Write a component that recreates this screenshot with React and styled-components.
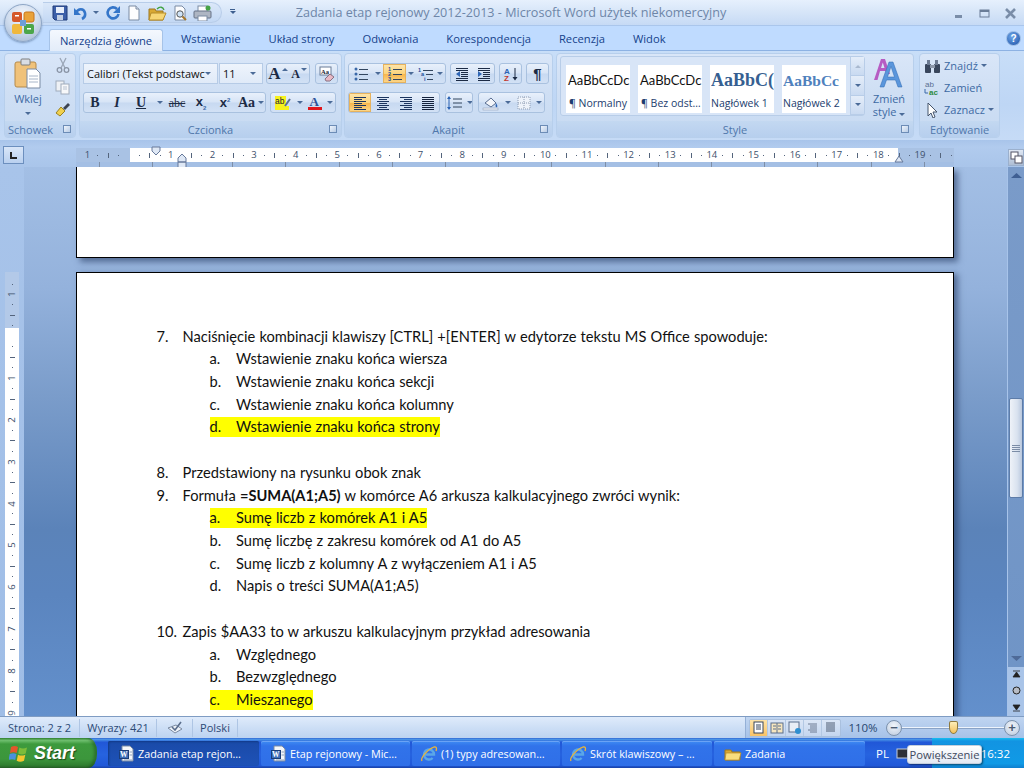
import React from "react";
import styled, { createGlobalStyle } from "styled-components";

const Global = createGlobalStyle`
  html, body { margin: 0; padding: 0; background: #6a90c4; }
  * { box-sizing: border-box; }
`;

const Win = styled.div`
  position: relative; width: 1024px; height: 768px; overflow: hidden;
  display: flex; flex-direction: column;
  font-family: "Open Sans", "Liberation Sans", sans-serif; font-size: 11px; color: #15428b;
`;
/* ---------- title ---------- */
const TitleBar = styled.div`
  height: 26px; flex: none; display: flex; align-items: center;
  background: linear-gradient(180deg, #e6f0fd 0%, #d6e5f8 50%, #c6daf5 100%);
  border-bottom: 1px solid #aac6ec; padding-left: 43px;
`;
const Qat = styled.div`
  width: 179px; height: 21px; display: flex; align-items: center; gap: 5px; padding-left: 9px;
  border: 1px solid #b8cde9; border-left: none; border-radius: 0 11px 11px 0;
  background: linear-gradient(180deg, #dbe8f9, #c3d8f4);
`;
const QatDrop = styled.div`
  margin-left: 6px; width: 9px; display: flex; flex-direction: column; align-items: center; gap: 1px;
  &::before { content: ""; width: 5px; height: 1px; background: #3d5f8f; }
  &::after { content: ""; border: 3px solid transparent; border-top-color: #3d5f8f; }
`;
const Title = styled.div`
  width: 432px; margin-left: 58px; white-space: nowrap; font-size: 12.6px; color: #6e86a8; text-align: center;
`;
const WinBtns = styled.div`
  margin-left: auto; display: flex; align-items: center; gap: 8px; padding-right: 4px;
`;
const OfficeBtn = styled.div`
  position: absolute; z-index: 5; left: 4px; top: 4px; width: 38px; height: 38px; border-radius: 50%;
  display: flex; align-items: center; justify-content: center;
  background: radial-gradient(circle at 50% 30%, #f6f9fe 0%, #cfdcee 50%, #9eb4d0 100%);
  border: 1px solid #8ea6c6; box-shadow: 0 1px 2px rgba(60,90,130,.5);
`;
/* ---------- tabs ---------- */
const TabRow = styled.div`
  height: 25px; flex: none; display: flex; align-items: flex-end; padding-left: 49px;
  background: #bfdbff; border-bottom: 1px solid #8db2e3;
`;
const Tab = styled.div`
  height: 22px; line-height: 21px; white-space: nowrap; font-size: 11.2px; flex: none;
  padding: 0 ${p => (p.$active ? 0 : 14)}px; margin-right: ${p => (p.$active ? 4 : 0)}px;
  color: #15428b; margin-bottom: ${p => (p.$active ? -1 : 0)}px;
  ${p => p.$active ? `width: 114px; text-align: center; background: linear-gradient(180deg,#f4f8fe,#e3ecf9); border: 1px solid #a6c3e8; border-bottom: none; border-radius: 3px 3px 0 0;` : ""}
`;
const Help = styled.div`
  margin-left: auto; margin-right: 3px; margin-bottom: 4px; width: 15px; height: 15px;
  border-radius: 50%; background: radial-gradient(circle at 40% 35%, #6fa8ea, #1b4fa5);
  border: 1px solid #9bbbe4; color: #fff; font: bold 10px/13px "Liberation Sans", sans-serif; text-align: center;
`;
/* ---------- ribbon ---------- */
const Ribbon = styled.div`
  height: 89px; flex: none; display: flex; padding: 2px 0 0 4px;
  background: linear-gradient(180deg, #c8def8 0%, #bed6f5 60%, #c6dbf6 100%);
`;
const Group = styled.div`
  width: ${p => p.$w}px; height: 85px; margin-right: ${p => p.$gap}px; flex: none;
  display: flex; flex-direction: column; border-radius: 4px; overflow: hidden;
  border: 1px solid #b7cfec;
  background: linear-gradient(180deg, #d9e6f8 0%, #cfdff4 45%, #c7daf2 100%);
`;
const GroupBody = styled.div`
  flex: 1; min-height: 0; display: flex;
`;
const GroupLabel = styled.div`
  height: 16px; flex: none; position: relative; text-align: ${p => (p.$left ? "left" : "center")};
  padding-left: ${p => (p.$left ? 3 : 0)}px; line-height: 17px; font-size: 11px;
  color: #4f77ab; background: linear-gradient(180deg,#c3d8f1,#b7cfee);
`;
const Launcher = styled.span`
  position: absolute; right: 4px; top: 4px; width: 8px; height: 8px; border: 1px solid #6c8cb6;
  background: linear-gradient(135deg,#eef4fc,#b8cce6);
`;
const PasteCol = styled.div`
  width: 46px; flex: none; display: flex; flex-direction: column; align-items: center; padding-top: 4px; color: #15428b;
`;
const PasteLabel = styled.div` margin-top: 2px; line-height: 14px; font-size: 11px; color: #3d6aa3; `;
const Caret = styled.span`
  display: inline-block; border: 3px solid transparent; border-top-color: ${p => p.$c || "#4b6b98"}; border-bottom: none;
  margin: ${p => p.$m || "0"};
`;
const RaisedCaret = styled(Caret)`
  margin-bottom: 8px; margin-left: -2px; transform: ${p => (p.$up ? "rotate(180deg)" : "none")};
`;
const ClipCol = styled.div`
  flex: 1; display: flex; flex-direction: column; align-items: center; padding-top: 3px; gap: 6px;
`;
const Rows = styled.div`
  flex: 1; display: flex; flex-direction: column; gap: 8px; padding: 9px 0 0 ${p => p.$pl}px;
`;
const Row = styled.div` display: flex; height: 21px; gap: ${p => p.$gap ?? 4}px; `;
const Tools = styled.div`
  display: flex; height: 21px; width: ${p => p.$w}px; flex: none; overflow: hidden;
  margin-left: ${p => p.$ml || 0}px;
  border: 1px solid #a9c1df; border-radius: 3px;
  background: linear-gradient(180deg,#e8f0fb 0%,#d7e4f6 48%,#c7d9f1 52%,#d2e1f5 100%);
`;
const Tool = styled.div`
  width: ${p => p.$w}px; flex: none; height: 19px; display: flex; align-items: center; justify-content: center; gap: 3px;
  color: #1c2b45; white-space: nowrap;
  ${p => p.$on ? "background: linear-gradient(180deg,#fde6ae 0%,#fbd47e 50%,#f9b84e 55%,#fbd990 100%); box-shadow: inset 0 0 0 1px #e6b25e;" : ""}
`;
const Combo = styled.div`
  height: 21px; width: ${p => p.$w}px; flex: none; display: flex; align-items: center; justify-content: space-between;
  padding: 0 6px 0 3px; font-size: 11px; color: #111; white-space: nowrap; overflow: hidden;
  background: linear-gradient(180deg,#eef4fc,#e0eaf8);
  border: 1px solid #b6cbe6; margin-left: ${p => p.$ml || 0}px;
`;
const Letter = styled.span`
  font: ${p => p.$i ? "italic" : ""} ${p => p.$n ? 400 : 700} ${p => p.$s || 13}px ${p => p.$sans ? '"Liberation Sans", sans-serif' : '"Liberation Serif", serif'};
  text-decoration: ${p => p.$d || "none"}; color: #1c2b45; line-height: 1;
`;
const Index = styled.span`
  font-size: 6px; color: #3a68a8; vertical-align: ${p => (p.$sup ? "super" : "sub")};
`;
const Gallery = styled.div`
  width: 305px; height: 60px; margin: 2px 0 0 3px; display: flex; padding: 8px 0 0 5px; gap: 8px; flex: none;
  border: 1px solid #b8cde8; border-radius: 3px; background: #d8e5f7; position: relative;
`;
const StyleCard = styled.div`
  width: 64px; height: 48px; flex: none; background: #fff; overflow: hidden; display: flex; flex-direction: column; align-items: flex-start;
  padding: 5px 0 0 1px; white-space: nowrap;
`;
const StylePreview = styled.div`
  height: 20px; font: ${p => p.$h ? `700 ${p.$s || 18}px/21px "Liberation Serif", serif` : `13px/21px "Lato", sans-serif`};
  color: ${p => p.$c || "#111"}; width: 63px; overflow: hidden; text-align: left;
  padding-left: ${p => p.$h ? 0 : 1}px;
`;
const StyleName = styled.div` margin-top: 6px; padding-left: ${p => p.$pl ?? 2}px; font-size: 10.5px; color: #1c3d6e; line-height: 14px; `;
const GalleryScroll = styled.div`
  position: absolute; right: 0; top: 0; bottom: 0; width: 14px; display: flex; flex-direction: column;
  border-left: 1px solid #b8cde8; background: #dbe7f7;
`;
const GalleryBtn = styled.div`
  flex: 1; display: flex; align-items: center; justify-content: center; border-bottom: 1px solid #b8cde8;
  background: linear-gradient(180deg,#e4edf9,#c9daf1);
`;
const FlipCaret = styled(Caret)` transform: rotate(180deg); `;
const ChangeStyle = styled.div`
  flex: 1; display: flex; flex-direction: column; align-items: center; padding-top: 3px;
`;
const ChangeLabel = styled.div` text-align: center; font-size: 11px; line-height: 13px; color: #3d6aa3; margin-top: 3px; `;
const EditCol = styled.div`
  flex: 1; display: flex; flex-direction: column; padding: 3px 0 0 4px; gap: 5px;
`;
const EditRow = styled.div`
  display: flex; align-items: center; height: 17px; gap: 3px; white-space: nowrap; color: #3d6aa3; font-size: 11px;
`;
const EditIcon = styled.span` width: 17px; display: flex; justify-content: center; `;
/* ---------- ruler ---------- */
const RulerRow = styled.div`
  height: 27px; flex: none; display: flex; position: relative;
  background: linear-gradient(180deg,#a8c4ea 0%,#b1cbee 25%,#a9c5ea 100%);
`;
const TabSel = styled.div`
  position: absolute; left: 3px; top: 6px; width: 21px; height: 18px; border: 1px solid #6c8fbe;
  background: linear-gradient(180deg,#d9e6f8,#b9d0ef); display: flex; align-items: center; justify-content: center;
`;
const RulerBody = styled.div`
  margin: 8px 0 0 76px; width: 878px; height: 19px; display: flex; flex-direction: column; position: relative;
`;
const RulerTrack = styled.div`
  height: 14px; flex: none; display: flex; align-items: center; padding-left: 6.3px; overflow: hidden;
  background: linear-gradient(90deg,#a9c2e4 0,#a9c2e4 54px,#fff 54px,#fff 822px,#a9c2e4 822px);
`;
const RulerCell = styled.div`
  width: 10.417px; flex: none; height: 14px; display: flex; align-items: center; justify-content: center;
  font: 9.5px/14px "Open Sans", sans-serif; color: #3c4f6b;
`;
const Mark = styled.span`
  display: block; background: #54647c; width: 1px; height: ${p => (p.$tick ? 5 : 1)}px;
`;
const RulerStrip = styled.div`
  flex: 1; background-color: #a4bfe4;
  background-image: repeating-linear-gradient(90deg, transparent 0, transparent 52.2px, #7e8ea6 52.2px, #7e8ea6 53.2px);
  background-position: 104px 0;
`;
const IndentMarks = styled.svg`
  position: absolute; left: 0; top: -2px; pointer-events: none; overflow: visible;
`;
const ViewToggle = styled.div`
  position: absolute; right: 0; top: 9px; width: 16px; height: 17px; background: linear-gradient(180deg,#dfe7f3,#aebed4);
  border: 1px solid #9bb0cd; display: flex; align-items: center; justify-content: center;
`;
/* ---------- workspace ---------- */
const Workspace = styled.div`
  height: 549px; flex: none; display: flex; overflow: hidden;
`;
const LeftRail = styled.div`
  width: 24px; flex: none; padding: 105px 5px 0 5px; background: linear-gradient(180deg,#a8c4ea,#9fbde6);
`;
const VRuler = styled.div`
  width: 14px; height: 444px; overflow: hidden; padding-top: 6.8px;
  background: linear-gradient(180deg,#b3c9e8 0,#b3c9e8 56px,#fff 56px);
`;
const VCell = styled.div`
  height: 10.46px; display: flex; align-items: center; justify-content: center;
  font: 9.5px/10px "Open Sans", sans-serif; color: #3c4f6b;
`;
const VDigit = styled.span` display: block; transform: rotate(-90deg); `;
const VMark = styled.span` display: block; background: #54647c; height: 1px; width: ${p => (p.$tick ? 5 : 1)}px; `;
const Canvas = styled.div`
  flex: 1; min-width: 0; padding-left: 52px; overflow: hidden; position: relative;
  background: linear-gradient(180deg,#a3bfe5 0%,#94b2dc 22%,#7a9cca 42%,#5b83b9 66%,#5b85bf 78%,#6390cc 100%);
`;
const PageStub = styled.div`
  width: 878px; height: 91px; background: #fff; border: solid #000; border-width: 0 1.5px 1.5px 1.5px;
  box-shadow: 4px 4px 6px rgba(30,50,90,.55); margin-bottom: 14px;
`;
const Page = styled.div`
  width: 878px; height: 470px; background: #fff; border: 1.5px solid #000; border-bottom: none;
  box-shadow: 4px 2px 6px rgba(30,50,90,.55); padding: 52.2px 0 0 79.5px;
  font-family: "Lato", sans-serif; font-size: 14.65px; color: #111;
`;
const Line = styled.div`
  height: 22.72px; line-height: 22.72px; white-space: nowrap; display: flex; align-items: center;
  margin-left: ${p => (p.$sub ? 53 : 0)}px; word-spacing: 0.4px;
`;
const Hl = styled.span`
  display: flex; height: 20px; line-height: 20px; padding-right: 0;
  background: ${p => (p.$on ? "#ffff00" : "transparent")};
`;
const Num = styled.span` width: ${p => (p.$sub ? 26.5 : 26)}px; flex: none; `;
const Strong = styled.b` font-weight: 700; `;
const ScrollBar = styled.div`
  width: 17px; flex: none; display: flex; flex-direction: column; align-items: center;
  background: linear-gradient(180deg,#7a9bc9,#6f94c6); border-left: 1px solid #a8c4ea;
`;
const ScrollEnd = styled.div`
  height: ${p => p.$h}px; flex: none; width: 100%; display: flex; align-items: center; justify-content: center;
`;
const NavEnd = styled(ScrollEnd)` background: #a9c4e8; `;
const Trough = styled.div` flex: 1; width: 100%; padding-top: ${p => p.$top}px; `;
const Thumb = styled.div`
  height: 100px; margin: 0 1px; border: 1px solid #5d7ca8; border-radius: 2px;
  background: linear-gradient(90deg,#eef2f8,#d9e2ef 60%,#b9c8de);
  display: flex; align-items: center; justify-content: center;
`;
const Grip = styled.div`
  width: 8px; height: 7px;
  background: repeating-linear-gradient(180deg,#7b8ca6 0,#7b8ca6 1px,transparent 1px,transparent 2px);
`;
/* ---------- status ---------- */
const Status = styled.div`
  height: 22px; flex: none; display: flex; align-items: center; position: relative;
  background: linear-gradient(180deg,#dfebfb 0%,#cfe0f6 45%,#bcd3f1 100%);
  border-top: 1px solid #7f9cc3; color: #2c4a75; font-size: 11px;
`;
const StatusCell = styled.div`
  height: 18px; display: flex; align-items: center; justify-content: center; white-space: nowrap;
  width: ${p => p.$w}px; border-right: 1px solid #aec5e4; flex: none; padding-left: ${p => p.$pl || 0}px;
`;
const StatusRight = styled.div`
  margin-left: auto; width: 279px; height: 21px; display: flex; align-items: center; padding-left: 3px;
  background: linear-gradient(180deg,#c0d5f1,#a6c2e8); border-left: 1px solid #94b0d6;
`;
const Views = styled.div`
  display: flex; height: 18px; width: 92px; border: 1px solid #a9c0de; border-radius: 2px; flex: none;
  background: linear-gradient(180deg,#dbe6f6,#c4d6ef);
`;
const ViewBtn = styled.div`
  flex: 1; display: flex; align-items: center; justify-content: center; border-right: 1px solid ${p => (p.$last ? "transparent" : "#b3c8e3")};
  ${p => p.$on ? "background: linear-gradient(180deg,#fde3a8,#f9c365);" : ""}
`;
const Zoom = styled.div` width: 44px; text-align: center; font-size: 11.5px; color: #28476f; flex: none; `;
const ZoomBtn = styled.div`
  width: 16px; height: 16px; flex: none; border-radius: 50%; border: 1px solid #7c92ad; margin-left: ${p => p.$ml || 0}px;
  background: radial-gradient(circle at 50% 35%,#f2f6fb,#b9c9de);
  display: flex; align-items: center; justify-content: center; font: bold 13px/13px "Liberation Sans", sans-serif; color: #4a5b72;
`;
const Slider = styled.div`
  width: 102px; flex: none; height: 2px; background: #eef4fc; border-bottom: 1px solid #8aa3c6; position: relative;
`;
const SliderThumb = styled.div`
  position: absolute; left: 47px; top: -6px; width: 9px; height: 13px; border: 1px solid #8f7a3e;
  background: linear-gradient(180deg,#fdeeb9,#f3c25c); border-radius: 2px 2px 50% 50%;
`;
/* ---------- taskbar ---------- */
const Taskbar = styled.div`
  height: 30px; flex: none; display: flex; align-items: center;
  background: linear-gradient(180deg,#3168d5 0%,#4993e6 5%,#2157d7 14%,#2663e0 55%,#2058d8 92%,#1941a5 100%);
  font-family: "Open Sans", sans-serif; color: #fff; font-size: 11px;
`;
const Start = styled.div`
  width: 97px; height: 30px; flex: none; display: flex; align-items: center; gap: 5px; padding-left: 9px;
  border-radius: 0 9px 9px 0 / 0 14px 14px 0;
  background: linear-gradient(180deg,#388e38 0%,#6fc06f 8%,#3d9a3d 20%,#3c963c 70%,#2f7d2f 92%,#28632a 100%);
  box-shadow: inset -3px 0 3px rgba(20,60,20,.4);
  font: italic bold 18px/30px "Liberation Sans", sans-serif; color: #fff; text-shadow: 1px 1px 1px #1a4a1a;
`;
const Tasks = styled.div`
  display: flex; gap: 2px; padding-left: 11px; flex: none; height: 26px; margin-top: 2px;
`;
const Task = styled.div`
  width: ${p => p.$w}px; height: 25px; flex: none; display: flex; align-items: center; gap: 3px;
  padding-left: ${p => p.$pl ?? 11}px; border-radius: 2px; white-space: nowrap; font-size: 10.8px;
  background: ${p => p.$on ? "linear-gradient(180deg,#1a4aa8,#1e52b7)" : "linear-gradient(180deg,#3f8cf3,#3173ea 20%,#2f6fe8)"};
  box-shadow: ${p => p.$on ? "inset 1px 1px 2px #123a88" : "inset 0 1px 0 #6aa3f5"};
`;
const Lang = styled.div` margin-left: 11px; width: 20px; font-size: 11.5px; flex: none; `;
const Tray = styled.div`
  margin-left: auto; width: 92px; height: 30px; flex: none; display: flex; align-items: center; justify-content: flex-end;
  padding-right: 14px; font-size: 11.5px;
  background: linear-gradient(180deg,#18bdf0 0%,#1294e2 10%,#109ae6 85%,#0f7fce 100%);
`;
const Tooltip = styled.div`
  position: absolute; left: 907px; top: 745px; width: 75px; height: 19px; border: 1px solid #c5cfdd; border-radius: 3px;
  background: linear-gradient(180deg,#fff,#e3e9f3); color: #3e4a5e; font-size: 11.2px; line-height: 17px; text-align: center;
  box-shadow: 1px 1px 2px rgba(0,0,0,.5); white-space: nowrap;
`;

/* ---------- icons ---------- */
const Svg = ({ w = 16, h = 16, vb, children }) => (
  <svg width={w} height={h} viewBox={vb || `0 0 ${w} ${h}`} style={{ display: "block", flex: "none" }}>{children}</svg>
);
const Lines = ({ items, c = "#1c3560" }) => (
  <Svg>{items.map(([x, y, w], i) => <rect key={i} x={x} y={y} width={w} height="1" fill={c} />)}</Svg>
);
const justifyY = [2, 4, 6, 8, 10, 12, 14];
const IconLeft = <Lines items={justifyY.map((y, i) => [2, y, i % 2 ? 8 : 12])} />;
const IconCenter = <Lines items={justifyY.map((y, i) => (i % 2 ? [4, y, 8] : [2, y, 12]))} />;
const IconRight = <Lines items={justifyY.map((y, i) => (i % 2 ? [6, y, 8] : [2, y, 12]))} />;
const IconJustify = <Lines items={justifyY.map(y => [2, y, 12])} c="#15233d" />;
const Dots = ({ n }) => (
  <Svg>
    {[3, 8, 13].map((y, i) => (
      <g key={y}>
        {n ? <text x="1" y={y + 2} fontSize="5.5" fontWeight="700" fill="#1f4f9c" fontFamily="Liberation Sans">{i + 1}</text> : <circle cx="3" cy={y} r="1.5" fill="#3a68a8" />}
        <rect x="6" y={y} width="9" height="1" fill="#33465f" />
      </g>
    ))}
  </Svg>
);
const Multi = (
  <Svg>
    <text x="0" y="6" fontSize="5.5" fontWeight="700" fill="#1f4f9c" fontFamily="Liberation Sans">1</text>
    <text x="3" y="10" fontSize="5.5" fontWeight="700" fill="#1f4f9c" fontFamily="Liberation Sans">a</text>
    <text x="6" y="15" fontSize="5.5" fontWeight="700" fill="#1f4f9c" fontFamily="Liberation Sans">i</text>
    <rect x="5" y="4" width="10" height="1" fill="#33465f" /><rect x="8" y="8" width="7" height="1" fill="#33465f" /><rect x="9" y="13" width="6" height="1" fill="#33465f" />
  </Svg>
);
const Indent = ({ flip }) => (
  <Svg>
    {[2, 4, 6, 8, 10, 12, 14].map(y => <rect key={y} x={y > 4 && y < 12 ? 7 : 2} y={y} width={y > 4 && y < 12 ? 7 : 12} height="1" fill="#1c2b45" />)}
    <path d={flip ? "M2 5l4 3-4 3z" : "M6 5l-4 3 4 3z"} fill="#2f66b5" />
  </Svg>
);
const Word = (
  <Svg w={17} h={17}>
    <path d="M4 1h8l3 3v12H4z" fill="#f4f6fa" stroke="#7b8ba3" />
    <rect x="1.5" y="5.5" width="9" height="8" fill="#3f6fb9" stroke="#1b3d78" />
    <text x="2" y="12" fontSize="7.5" fontWeight="700" fill="#fff" fontFamily="Liberation Serif">W</text>
    <path d="M11.5 7h2.5M11.5 10h2.5M6 15h8" stroke="#8fa2bd" />
  </Svg>
);
const IE = (
  <Svg w={18} h={18}>
    <path d="M5 9.5h9A5 5 0 1 0 12.6 13" fill="none" stroke="#5aa7e8" strokeWidth="2.4" />
    <path d="M2 16C0 13 8 4 14 2c2.5-.6 3 1.5 2 4" fill="none" stroke="#e9b53a" strokeWidth="1.3" />
  </Svg>
);
const Folder = (
  <Svg w={18} h={16}>
    <path d="M1 4h6l1 2h8v8H1z" fill="#d9a832" stroke="#a27a1a" />
    <path d="M2 7h15l-2 7H1z" fill="#f9dd7d" stroke="#b4892a" strokeWidth=".7" />
  </Svg>
);
const OfficeLogo = (
  <Svg w={26} h={26}>
    <rect x="2" y="2" width="10" height="10" rx="2" fill="#d5582b" />
    <rect x="14" y="2" width="10" height="10" rx="2" fill="#e9a23a" stroke="#c8741a" />
    <rect x="2" y="14" width="10" height="10" rx="2" fill="#f0b83c" />
    <rect x="14" y="14" width="10" height="10" rx="2" fill="#4ba64a" />
    <rect x="10" y="10" width="6" height="6" fill="#6f9ed8" />
    <rect x="5" y="5" width="4" height="1.5" fill="#fff" /><rect x="17" y="18" width="4" height="1.5" fill="#fff" />
  </Svg>
);
const Windows = (
  <Svg w={20} h={20}>
    <path d="M2 4c3-1.5 5-1 7 0l-1.3 6C5.5 9 3.5 9 1 10z" fill="#e3562b" />
    <path d="M10.4 4.5c2.5 1.4 4.7 1.4 7.6 0L16.7 10.6c-2.8 1.3-5 1.2-7.4 0z" fill="#7dbc3a" />
    <path d="M.7 11c2.6-1 4.5-1 6.7 0L6.2 17c-2.2-1-4.4-1-6.7 0z" fill="#4a90dc" />
    <path d="M9 11.7c2.3 1.2 4.5 1.2 7.3 0L15 17.8c-2.8 1.3-5 1.2-7.3 0z" fill="#f5c62f" />
  </Svg>
);

const rulerRange = [];
for (let i = -4; i <= 79; i++) rulerRange.push(i);
const vRange = [];
for (let i = -5; i <= 38; i++) vRange.push(i);

const tasks = [
  { t: "Zadania etap rejon…", w: 151, on: true, ic: Word, pl: 10 },
  { t: "Etap rejonowy - Mic…", w: 149, ic: Word, pl: 9 },
  { t: "(1) typy adresowan…", w: 148, ic: IE, pl: 8 },
  { t: "Skrót klawiszowy – …", w: 150, ic: IE, pl: 7 },
  { t: "Zadania", w: 151, ic: Folder, pl: 10 },
];

const doc = [
  { n: "7.", t: "Naciśnięcie kombinacji klawiszy [CTRL] +[ENTER] w edytorze tekstu MS Office spowoduje:" },
  { n: "a.", t: "Wstawienie znaku końca wiersza", s: 1 },
  { n: "b.", t: "Wstawienie znaku końca sekcji", s: 1 },
  { n: "c.", t: "Wstawienie znaku końca kolumny", s: 1 },
  { n: "d.", t: "Wstawienie znaku końca strony", s: 1, h: 1 },
  {},
  { n: "8.", t: "Przedstawiony na rysunku obok znak" },
  { n: "9.", t: <>Formuła <Strong>=SUMA(A1;A5)</Strong> w komórce A6 arkusza kalkulacyjnego zwróci wynik:</> },
  { n: "a.", t: "Sumę liczb z komórek A1 i A5", s: 1, h: 1 },
  { n: "b.", t: "Sumę liczbę z zakresu komórek od A1 do A5", s: 1 },
  { n: "c.", t: "Sumę liczb z kolumny A z wyłączeniem A1 i A5", s: 1 },
  { n: "d.", t: "Napis o treści SUMA(A1;A5)", s: 1 },
  {},
  { n: "10.", t: "Zapis $AA33 to w arkuszu kalkulacyjnym przykład adresowania" },
  { n: "a.", t: "Względnego", s: 1 },
  { n: "b.", t: "Bezwzględnego", s: 1 },
  { n: "c.", t: "Mieszanego", s: 1, h: 1 },
];

export default function App() {
  return (
    <Win>
      <Global />
      <TitleBar>
        <Qat>
          <Svg><path d="M1 1h14v14H3l-2-2z" fill="#3c5fa8" stroke="#1f3a78" /><rect x="4" y="2" width="8" height="6" fill="#e7eefa" /><rect x="5" y="10" width="6" height="5" fill="#c3cfe3" /></Svg>
          <Svg w={14}><path d="M3 8c2-5 8-5 9 0 .6 3-1 5-3 6" fill="none" stroke="#3576c9" strokeWidth="2.6" /><path d="M1 3v7h7z" fill="#3576c9" /></Svg>
          <Caret $m="0 1px" />
          <Svg><path d="M12 4a5.5 5.5 0 1 0 1.5 5" fill="none" stroke="#3576c9" strokeWidth="2.6" /><path d="M15 1v7H8z" fill="#3576c9" /></Svg>
          <Svg><path d="M3 1h7l3 3v11H3z" fill="#fdfdfe" stroke="#7b8ba3" /><path d="M10 1v3h3" fill="#dfe6f1" stroke="#7b8ba3" /></Svg>
          <Svg w={20}><path d="M2 4h6l1 2h7v9H2z" fill="#d9a832" stroke="#9c7620" /><path d="M4 8h15l-3 7H2z" fill="#f7d675" stroke="#b58c2a" /><path d="M10 4c3-3 6-2 7 1" fill="none" stroke="#3fa23f" strokeWidth="1.3" /></Svg>
          <Svg><path d="M3 1h7l3 3v11H3z" fill="#fdfdfe" stroke="#7b8ba3" /><circle cx="8" cy="9" r="3.2" fill="#cfe3f7" stroke="#555" /><path d="M10.5 11.5l3.5 3.5" stroke="#a5762a" strokeWidth="2" /></Svg>
          <Svg w={19}><rect x="5" y="1" width="9" height="6" fill="#fff" stroke="#7b8ba3" /><rect x="1" y="6" width="17" height="7" rx="1" fill="#aeb6c3" stroke="#667287" /><rect x="5" y="11" width="9" height="5" fill="#fff" stroke="#7b8ba3" /><circle cx="15" cy="3" r="2.5" fill="#46a346" /></Svg>
        </Qat>
        <QatDrop />
        <Title>Zadania etap rejonowy 2012-2013 - Microsoft Word użytek niekomercyjny</Title>
        <WinBtns>
          <Svg w={18}><rect x="5" y="10" width="7" height="3" fill="#7a8da8" /></Svg>
          <Svg w={18}><rect x="4" y="5" width="9" height="7" fill="none" stroke="#6a7d98" /><rect x="4" y="5" width="9" height="2" fill="#6a7d98" /></Svg>
          <Svg w={18}><path d="M4 4l9 9M13 4l-9 9" stroke="#7a8da8" strokeWidth="2.6" /></Svg>
        </WinBtns>
      </TitleBar>
      <OfficeBtn>{OfficeLogo}</OfficeBtn>

      <TabRow>
        <Tab $active>Narzędzia główne</Tab>
        <Tab>Wstawianie</Tab>
        <Tab>Układ strony</Tab>
        <Tab>Odwołania</Tab>
        <Tab>Korespondencja</Tab>
        <Tab>Recenzja</Tab>
        <Tab>Widok</Tab>
        <Help>?</Help>
      </TabRow>

      <Ribbon>
        <Group $w={72} $gap={3}>
          <GroupBody>
            <PasteCol>
              <Svg w={28} h={32}>
                <rect x="1" y="4" width="21" height="25" rx="2" fill="#f0c27a" stroke="#b58a4a" />
                <rect x="7" y="1" width="9" height="6" rx="1" fill="#d9dde4" stroke="#7e7e7e" />
                <path d="M13 11h9l4 4v15H13z" fill="#fff" stroke="#7b8ba3" />
                <path d="M15 18h9M15 21h9M15 24h9" stroke="#a8b6c9" />
              </Svg>
              <PasteLabel>Wklej</PasteLabel>
              <Caret $m="6px 0 0" />
            </PasteCol>
            <ClipCol>
              <Svg><path d="M5 1l5 10M11 1L6 11" stroke="#9aa6b6" strokeWidth="1.3" /><circle cx="4.5" cy="13" r="2.3" fill="none" stroke="#8a95a6" strokeWidth="1.3" /><circle cx="11.5" cy="13" r="2.3" fill="none" stroke="#8a95a6" strokeWidth="1.3" /></Svg>
              <Svg><rect x="1" y="2" width="8" height="10" fill="#eef1f5" stroke="#a0acbc" /><rect x="6" y="5" width="8" height="10" fill="#f7f8fa" stroke="#a0acbc" /><path d="M8 8h4M8 10h4" stroke="#b8c2d0" /></Svg>
              <Svg><path d="M1 12l5-6 4 4-5 5z" fill="#f1d04e" stroke="#9a8120" /><path d="M8 7l5-5 2 2-5 5z" fill="#3d4452" /></Svg>
            </ClipCol>
          </GroupBody>
          <GroupLabel $left>Schowek<Launcher /></GroupLabel>
        </Group>

        <Group $w={263} $gap={2}>
          <GroupBody>
            <Rows $pl={3}>
              <Row $gap={3}>
                <Combo $w={135}>Calibri (Tekst podstawc<Caret /></Combo>
                <Combo $w={44} $ml={-2}>11<Caret /></Combo>
                <Tools $w={44}>
                  <Tool $w={22}><Letter $s={17}>A</Letter><RaisedCaret $up /></Tool>
                  <Tool $w={20}><Letter $s={12}>A</Letter><RaisedCaret /></Tool>
                </Tools>
                <Tools $w={23} $ml={2}>
                  <Tool $w={21}><Svg w={17}><rect x="2" y="1" width="11" height="8" fill="#fff" stroke="#6a7d98" /><text x="3" y="7.5" fontSize="6.5" fontWeight="700" fill="#223" fontFamily="Liberation Serif">Aa</text><path d="M7 13l5-5 4 3-4 4H8z" fill="#e8b9c6" stroke="#8a7080" /></Svg></Tool>
                </Tools>
              </Row>
              <Row $gap={4}>
                <Tools $w={183}>
                  <Tool $w={22}><Letter $s={14}>B</Letter></Tool>
                  <Tool $w={22}><Letter $s={14} $i>I</Letter></Tool>
                  <Tool $w={26}><Letter $s={14} $d="underline">U</Letter></Tool>
                  <Tool $w={11}><Caret /></Tool>
                  <Tool $w={24}><Letter $s={12} $n $d="line-through">abc</Letter></Tool>
                  <Tool $w={24}><Letter $s={13} $sans>x<Index>2</Index></Letter></Tool>
                  <Tool $w={24}><Letter $s={13} $sans>x<Index $sup>2</Index></Letter></Tool>
                  <Tool $w={28}><Letter $s={14}>Aa</Letter><Caret /></Tool>
                </Tools>
                <Tools $w={66}>
                  <Tool $w={24}><Svg w={18}><rect x="1" y="11" width="14" height="4" fill="#f7f11d" /><rect x="1" y="1" width="11" height="10" fill="#f7f11d" /><text x="1" y="9" fontSize="8.5" fill="#223" fontFamily="Liberation Sans">ab</text><path d="M11 11l5-7" stroke="#5b6f92" strokeWidth="2" /></Svg></Tool>
                  <Tool $w={10}><Caret /></Tool>
                  <Tool $w={20}><Svg w={18}><text x="3.5" y="11" fontSize="13" fontWeight="700" fill="#2c5199" fontFamily="Liberation Serif">A</text><rect x="2" y="12" width="14" height="3" fill="#e0161c" /></Svg></Tool>
                  <Tool $w={10}><Caret /></Tool>
                </Tools>
              </Row>
            </Rows>
          </GroupBody>
          <GroupLabel>Czcionka<Launcher /></GroupLabel>
        </Group>

        <Group $w={209} $gap={3}>
          <GroupBody>
            <Rows $pl={3}>
              <Row $gap={4}>
                <Tools $w={98}>
                  <Tool $w={24}><Dots /></Tool><Tool $w={10}><Caret /></Tool>
                  <Tool $w={23} $on><Dots n /></Tool><Tool $w={10}><Caret /></Tool>
                  <Tool $w={29}>{Multi}<Caret /></Tool>
                </Tools>
                <Tools $w={45}>
                  <Tool $w={22}><Indent /></Tool><Tool $w={21}><Indent flip /></Tool>
                </Tools>
                <Tools $w={23}>
                  <Tool $w={21}><Svg><text x="1" y="7.5" fontSize="8" fontWeight="700" fill="#2a62b3" fontFamily="Liberation Sans">A</text><text x="1" y="15" fontSize="8" fontWeight="700" fill="#c4392d" fontFamily="Liberation Sans">Z</text><path d="M12 2v11" stroke="#1c2b45" /><path d="M9.5 11l2.5 3.5 2.5-3.5z" fill="#1c2b45" /></Svg></Tool>
                </Tools>
                <Tools $w={23}>
                  <Tool $w={21}><Letter $s={15} $sans>¶</Letter></Tool>
                </Tools>
              </Row>
              <Row $gap={5}>
                <Tools $w={92}>
                  <Tool $w={22} $on>{IconLeft}</Tool><Tool $w={23}>{IconCenter}</Tool><Tool $w={23}>{IconRight}</Tool><Tool $w={22}>{IconJustify}</Tool>
                </Tools>
                <Tools $w={28}>
                  <Tool $w={26}><Svg w={18}><path d="M3 2v12" stroke="#2a62b3" /><path d="M1 4l2-3 2 3zM1 12l2 3 2-3z" fill="#2a62b3" /><path d="M7 4h9M7 8h9M7 12h9" stroke="#33465f" /></Svg><Caret /></Tool>
                </Tools>
                <Tools $w={67}>
                  <Tool $w={24}><Svg w={18}><path d="M3 8l6-5 5 5-5 4z" fill="#f4f6fa" stroke="#5b6f92" /><path d="M14 8c1 2 2 3 1 4s-2 0-1-4z" fill="#2a62b3" /><rect x="1" y="13" width="15" height="2" fill="#e8edf5" stroke="#8a99b0" strokeWidth=".5" /></Svg></Tool>
                  <Tool $w={10}><Caret /></Tool>
                  <Tool $w={21}><Svg><rect x="2" y="2" width="12" height="12" fill="#eef3fa" stroke="#8d9cb3" strokeDasharray="1 1" /><path d="M8 2v12M2 8h12" stroke="#8d9cb3" strokeDasharray="1 1" /></Svg></Tool>
                  <Tool $w={10}><Caret /></Tool>
                </Tools>
              </Row>
            </Rows>
          </GroupBody>
          <GroupLabel>Akapit<Launcher /></GroupLabel>
        </Group>

        <Group $w={358} $gap={5}>
          <GroupBody>
            <Gallery>
              <StyleCard><StylePreview>AaBbCcDc</StylePreview><StyleName>¶ Normalny</StyleName></StyleCard>
              <StyleCard><StylePreview>AaBbCcDc</StylePreview><StyleName>¶ Bez odst…</StyleName></StyleCard>
              <StyleCard><StylePreview $h $c="#365f91">AaBbC(</StylePreview><StyleName $pl={0}>Nagłówek 1</StyleName></StyleCard>
              <StyleCard><StylePreview $h $s={15.5} $c="#4f81bd">AaBbCc</StylePreview><StyleName $pl={0}>Nagłówek 2</StyleName></StyleCard>
              <GalleryScroll>
                <GalleryBtn><FlipCaret $c="#a9b9cf" /></GalleryBtn>
                <GalleryBtn><Caret $c="#4b6b98" /></GalleryBtn>
                <GalleryBtn><Caret $c="#4b6b98" /></GalleryBtn>
              </GalleryScroll>
            </Gallery>
            <ChangeStyle>
              <Svg w={32} h={32}>
                <path fillRule="evenodd" d="M1 23L8 2h4l5 15h-3.5l-1-3H7l-2.5 9zM8 11h3.5L9.8 5.5z" fill="#b65cc3" />
                <path fillRule="evenodd" d="M7 30L16 5h4l9 25h-4l-2.5-7h-9L11 30zM14.5 20h7L18 9.5z" fill="#5a96dc" stroke="#2f68b0" strokeWidth=".5" />
              </Svg>
              <ChangeLabel>Zmień<br />style <Caret /></ChangeLabel>
            </ChangeStyle>
          </GroupBody>
          <GroupLabel>Style<Launcher /></GroupLabel>
        </Group>

        <Group $w={81} $gap={0}>
          <GroupBody>
            <EditCol>
              <EditRow>
                <EditIcon><Svg w={17}><rect x="1" y="6" width="6" height="9" rx="1" fill="#39465c" /><rect x="10" y="6" width="6" height="9" rx="1" fill="#39465c" /><rect x="3" y="2" width="3" height="5" fill="#6d7b92" /><rect x="11" y="2" width="3" height="5" fill="#6d7b92" /><rect x="6" y="7" width="5" height="3" fill="#8d98aa" /></Svg></EditIcon>
                Znajdź <Caret />
              </EditRow>
              <EditRow>
                <EditIcon><Svg w={17}><text x="1" y="7" fontSize="8" fill="#5b6f92" fontFamily="Liberation Sans">ab</text><text x="5" y="15" fontSize="8" fontWeight="700" fill="#2d8a3f" fontFamily="Liberation Sans">ac</text><path d="M1 9v4h3" fill="none" stroke="#3a68a8" /></Svg></EditIcon>
                Zamień
              </EditRow>
              <EditRow>
                <EditIcon><Svg w={17}><path d="M4 1v13l3-3 2 5 2-1-2-5h4z" fill="#fff" stroke="#45546b" /></Svg></EditIcon>
                Zaznacz <Caret />
              </EditRow>
            </EditCol>
          </GroupBody>
          <GroupLabel>Edytowanie</GroupLabel>
        </Group>
      </Ribbon>

      <RulerRow>
        <TabSel><Svg w={9} h={9}><path d="M2 1v6h6" fill="none" stroke="#222" strokeWidth="2" /></Svg></TabSel>
        <RulerBody>
          <RulerTrack>
            {rulerRange.map(i => (
              <RulerCell key={i}>
                {i === 0 ? null : i % 4 === 0 ? Math.abs(i / 4) : <Mark $tick={i % 2 === 0} />}
              </RulerCell>
            ))}
          </RulerTrack>
          <RulerStrip />
          <IndentMarks width="878" height="24">
            <path d="M76 1h8v4l-4 4-4-4z" fill="#dfe8f5" stroke="#66799a" />
            <path d="M102 12l4-4 4 4v4h-8zM102 16h8v6h-8z" fill="#dfe8f5" stroke="#66799a" />
            <path d="M819 16l4-6 4 6z" fill="#dfe8f5" stroke="#66799a" />
          </IndentMarks>
        </RulerBody>
        <ViewToggle><Svg w={13} h={13}><rect x="1" y="1" width="7" height="7" fill="#fff" stroke="#556" /><rect x="5" y="5" width="7" height="7" fill="#fff" stroke="#556" /></Svg></ViewToggle>
      </RulerRow>

      <Workspace>
        <LeftRail>
          <VRuler>
            {vRange.map(i => (
              <VCell key={i}>
                {i === 0 ? null : i % 4 === 0 ? <VDigit>{Math.abs(i / 4)}</VDigit> : <VMark $tick={i % 2 === 0} />}
              </VCell>
            ))}
          </VRuler>
        </LeftRail>
        <Canvas>
          <PageStub />
          <Page>
            {doc.map((l, i) => (
              <Line key={i} $sub={l.s}>
                {l.n && <Hl $on={l.h}><Num $sub={l.s}>{l.n}</Num><span>{l.t}</span></Hl>}
              </Line>
            ))}
          </Page>
        </Canvas>
        <ScrollBar>
          <ScrollEnd $h={17}><Svg w={11} h={5}><path d="M0 5L5.5 0 11 5z" fill="#3f5f93" /></Svg></ScrollEnd>
          <Trough $top={214}><Thumb><Grip /></Thumb></Trough>
          <ScrollEnd $h={17}><Svg w={11} h={5}><path d="M0 0h11L5.5 5z" fill="#4e6a98" /></Svg></ScrollEnd>
          <NavEnd $h={15}><Svg w={9} h={9}><path d="M1 1h7M4.5 2L8 7H1z" fill="#222" stroke="#222" strokeWidth=".8" /></Svg></NavEnd>
          <NavEnd $h={16}><Svg w={9} h={9}><circle cx="4.5" cy="4.5" r="3.5" fill="#b7bcc5" stroke="#222" /></Svg></NavEnd>
          <NavEnd $h={18}><Svg w={9} h={9}><path d="M1 8h7M4.5 7L8 2H1z" fill="#222" stroke="#222" strokeWidth=".8" /></Svg></NavEnd>
        </ScrollBar>
      </Workspace>

      <Status>
        <StatusCell $w={80}>Strona: 2 z 2</StatusCell>
        <StatusCell $w={77}>Wyrazy: 421</StatusCell>
        <StatusCell $w={36}><Svg w={18} h={15}><path d="M2 8l7 5 7-4-6-4z" fill="#eef3fa" stroke="#7b8ba3" /><path d="M6 7l3 3 6-8" fill="none" stroke="#5a6e8c" strokeWidth="1.6" /></Svg></StatusCell>
        <StatusCell $w={45}>Polski</StatusCell>
        <StatusRight>
          <Views>
            <ViewBtn $on><Svg w={13} h={13}><rect x="2" y="1" width="9" height="11" fill="#fff" stroke="#39465c" /><path d="M4 4h5M4 6h5M4 8h5" stroke="#39465c" /></Svg></ViewBtn>
            <ViewBtn><Svg w={14} h={13}><rect x="1" y="2" width="12" height="10" fill="#f6e6bf" stroke="#5a6e8c" /><path d="M7 2v10M3 5h3M8 5h3M3 8h3M8 8h3" stroke="#5a6e8c" /></Svg></ViewBtn>
            <ViewBtn><Svg w={14} h={13}><rect x="1" y="1" width="10" height="10" fill="#e9eef6" stroke="#5a6e8c" /><circle cx="10" cy="10" r="3" fill="#2f8fd0" /></Svg></ViewBtn>
            <ViewBtn><Svg w={13} h={13}><path d="M2 3h9M4 5h7M4 7h7M2 9h9M4 11h7" stroke="#6d7b92" /></Svg></ViewBtn>
            <ViewBtn $last><Svg w={13} h={13}><path d="M2 2h9M2 4h9M2 6h9M2 8h9M2 10h9" stroke="#4f5c72" /></Svg></ViewBtn>
          </Views>
          <Zoom>110%</Zoom>
          <ZoomBtn $ml={1}>−</ZoomBtn>
          <Slider><SliderThumb /></Slider>
          <ZoomBtn>+</ZoomBtn>
        </StatusRight>
      </Status>

      <Taskbar>
        <Start>{Windows}Start</Start>
        <Tasks>
          {tasks.map(t => (
            <Task key={t.t} $w={t.w} $on={t.on} $pl={t.pl}>{t.ic}{t.t}</Task>
          ))}
        </Tasks>
        <Lang>PL</Lang>
        <Svg w={14} h={14}><rect x="1" y="3" width="12" height="9" fill="#2b2f38" stroke="#c5ced9" /></Svg>
        <Tray>16:32</Tray>
      </Taskbar>
      <Tooltip>Powiększenie</Tooltip>
    </Win>
  );
}
